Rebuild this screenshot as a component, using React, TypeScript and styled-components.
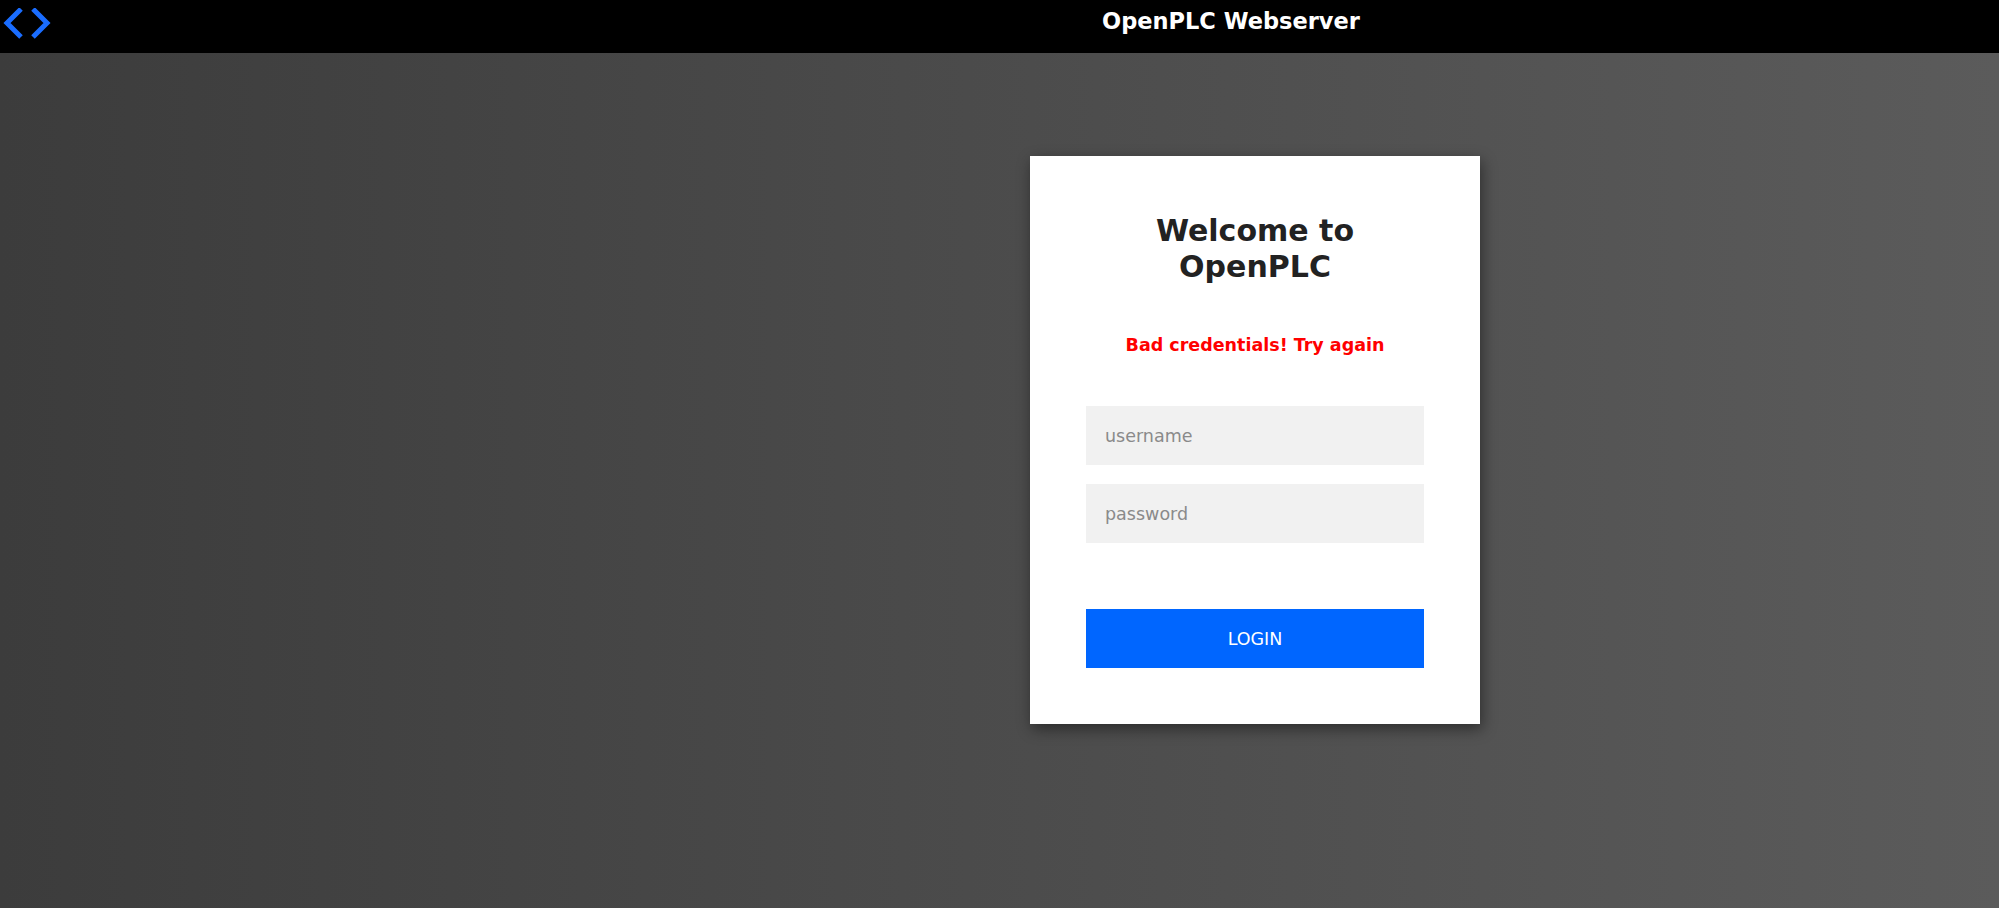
import styled, { createGlobalStyle } from 'styled-components'

const GlobalStyle = createGlobalStyle`
    html, body {
        margin: 0;
        padding: 0;
        height: 100%;
    }
    body {
        font-family: 'DejaVu Sans', 'Liberation Sans', sans-serif;
    }
    #root {
        height: 100%;
    }
    * {
        box-sizing: border-box;
    }
`

function CodeIcon() {
    return (
        <svg width="54" height="46" viewBox="0 0 54 46" fill="none">
            <polyline points="21,1 7,15 21,29" stroke="#1a6dff" strokeWidth="5" strokeLinejoin="miter" />
            <polyline points="33,1 47,15 33,29" stroke="#1a6dff" strokeWidth="5" strokeLinejoin="miter" />
        </svg>
    )
}

export default function App() {
    return (
        <Page>
            <GlobalStyle />
            <TopBar>
                <IconBox>
                    <CodeIcon />
                </IconBox>
                <BarTitle>OpenPLC Webserver</BarTitle>
            </TopBar>
            <Main>
                <LoginCard>
                    <Title>Welcome to<br />OpenPLC</Title>
                    <ErrorMsg>Bad credentials! Try again</ErrorMsg>
                    <Fields>
                        <Field type="text" placeholder="username" />
                        <Field type="password" placeholder="password" />
                    </Fields>
                    <LoginButton>LOGIN</LoginButton>
                </LoginCard>
            </Main>
        </Page>
    )
}

const Page = styled.div`
    height: 100vh;
    width: 100vw;
    display: flex;
    flex-direction: column;
    overflow: hidden;
`

const TopBar = styled.header`
    height: 53px;
    flex-shrink: 0;
    background: #000000;
    display: flex;
    align-items: flex-start;
`

const IconBox = styled.div`
    width: 54px;
    padding-top: 8px;
    display: flex;
`

const BarTitle = styled.h1`
    margin: 0;
    padding-top: 8px;
    margin-left: 1048px;
    font-size: 22.5px;
    font-weight: bold;
    color: #ffffff;
    white-space: nowrap;
`

const Main = styled.main`
    flex: 1;
    background: linear-gradient(90deg, #3c3c3c 0%, #5b5b5b 100%);
    display: flex;
    justify-content: center;
    align-items: flex-start;
    padding-top: 103px;
    padding-left: 511px;
`

const LoginCard = styled.div`
    width: 450px;
    background: #ffffff;
    padding: 57px 56px 56px;
    display: flex;
    flex-direction: column;
    align-items: stretch;
    box-shadow: 2px 5px 14px rgba(0, 0, 0, 0.45);
`

const Title = styled.h2`
    margin: 0;
    font-size: 30px;
    line-height: 36px;
    font-weight: bold;
    color: #222222;
    text-align: center;
`

const ErrorMsg = styled.p`
    margin: 50px 0 0;
    font-size: 17.5px;
    line-height: 20px;
    font-weight: bold;
    color: #ff0000;
    text-align: center;
`

const Fields = styled.div`
    margin-top: 51px;
    display: flex;
    flex-direction: column;
    gap: 19px;
`

const Field = styled.input`
    height: 59px;
    width: 100%;
    border: none;
    outline: none;
    background: #f1f1f1;
    padding: 0 19px;
    font-family: 'DejaVu Sans', 'Liberation Sans', sans-serif;
    font-size: 17.5px;
    color: #333333;

    &::placeholder {
        color: #8a8a8a;
    }
`

const LoginButton = styled.button`
    margin-top: 66px;
    height: 59px;
    width: 100%;
    border: none;
    outline: none;
    background: #0066ff;
    color: #ffffff;
    font-family: 'DejaVu Sans', 'Liberation Sans', sans-serif;
    font-size: 17.5px;
    cursor: pointer;
`
